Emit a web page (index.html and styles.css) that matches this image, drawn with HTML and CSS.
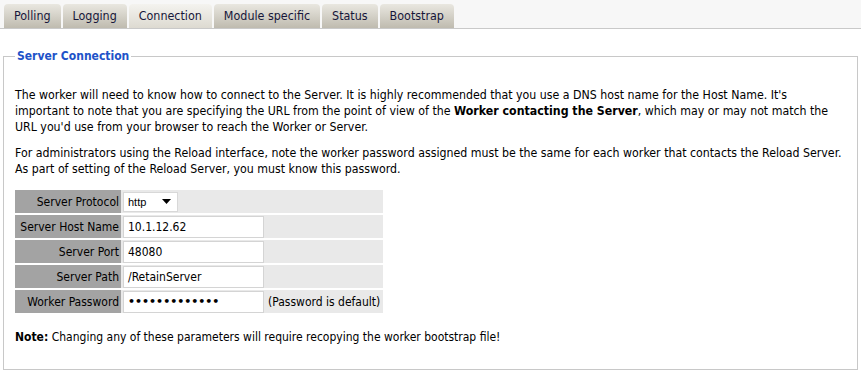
FILE: index.html
```html
<!DOCTYPE html>
<html>
<head>
<meta charset="utf-8">
<link rel="stylesheet" href="styles.css">
</head>
<body>
<div class="tabbar">
  <div class="tab">Polling</div>
  <div class="tab">Logging</div>
  <div class="tab active">Connection</div>
  <div class="tab">Module specific</div>
  <div class="tab">Status</div>
  <div class="tab">Bootstrap</div>
</div>
<div class="content">
  <fieldset class="box">
    <legend class="legend">Server Connection</legend>
    <p class="para p1">The worker will need to know how to connect to the Server. It is highly recommended that you use a DNS host name for the Host Name. It's<br>important to note that you are specifying the URL from the point of view of the <b>Worker contacting the Server</b>, which may or may not match the<br>URL you'd use from your browser to reach the Worker or Server.</p>
    <p class="para p2">For administrators using the Reload interface, note the worker password assigned must be the same for each worker that contacts the Reload Server.<br>As part of setting of the Reload Server, you must know this password.</p>
    <table class="form">
      <tr><td class="lbl">Server Protocol</td><td class="val"><span class="select">http<svg class="arrow" width="9" height="5" viewBox="0 0 9 5"><path d="M0 0H9L4.5 5Z" fill="#000"/></svg></span></td></tr>
      <tr><td class="lbl">Server Host Name</td><td class="val"><span class="input">10.1.12.62</span></td></tr>
      <tr><td class="lbl">Server Port</td><td class="val"><span class="input">48080</span></td></tr>
      <tr><td class="lbl">Server Path</td><td class="val"><span class="input">/RetainServer</span></td></tr>
      <tr><td class="lbl">Worker Password</td><td class="val"><span class="input pw">•••••••••••••</span><span class="hint">(Password is default)</span></td></tr>
    </table>
    <p class="note"><b>Note:</b> Changing any of these parameters will require recopying the worker bootstrap file!</p>
  </fieldset>
</div>
</body>
</html>
```
FILE: styles.css
```css
html, body { margin: 0; padding: 0; background: #fff; }
body { font-family: "DejaVu Sans Condensed", "DejaVu Sans", sans-serif; font-size: 12px; color: #000; width: 861px; height: 371px; overflow: hidden; }
.tabbar { display: flex; gap: 2px; height: 28px; padding: 0 0 0 4px; background: #f7f7f7; border-bottom: 1px solid #c9c9c9; align-items: flex-end; box-sizing: content-box; }
.tab { height: 24px; line-height: 24px; padding: 0 10px; border-radius: 4px 4px 0 0; background: linear-gradient(#e9e7e0, #bfbbaf); color: #16163a; font-size: 12.4px; }
.tab.active { background: linear-gradient(#f4f3ef, #dddad1); }
.content { padding: 20px 3px 0 3px; }
.box { margin: 0; border: 1px solid #c8c8c8; border-radius: 0; padding: 0 11px; height: 321px; box-sizing: border-box; }
.legend { color: #2052c8; font-weight: bold; font-size: 12px; padding: 0 2px; margin-left: 0; }
.para { margin: 0; line-height: 16px; font-size: 12.25px; white-space: nowrap; }
.p1 { margin-top: 24px; }
.p2 { margin-top: 10px; }
.form { border-spacing: 0 2px; margin-top: 11px; border-collapse: separate; }
.form td { height: 23px; padding: 0; }
.lbl { background: #a3a3a3; text-align: right; padding: 0 2px 0 4px !important; white-space: nowrap; width: 100px; }
.val { background: #e9e9e9; width: 260px; padding-left: 2px !important; }
.select { display: inline-flex; align-items: center; justify-content: space-between; width: 55px; height: 20px; box-sizing: border-box; background: #fff; border: 1px solid #d8d8d8; font-family: "Liberation Sans", sans-serif; font-size: 11px; padding: 0 6px 0 4px; }
.input { display: inline-block; width: 141px; height: 22px; line-height: 20px; box-sizing: border-box; background: #fff; border: 1px solid #d4d4d4; padding: 0 4px; vertical-align: middle; }
.pw { font-family: "DejaVu Sans", sans-serif; font-weight: bold; font-size: 11px; }
.hint { margin-left: 4px; vertical-align: middle; }
.note { margin: 15px 0 0 0; font-size: 12px; }
```
